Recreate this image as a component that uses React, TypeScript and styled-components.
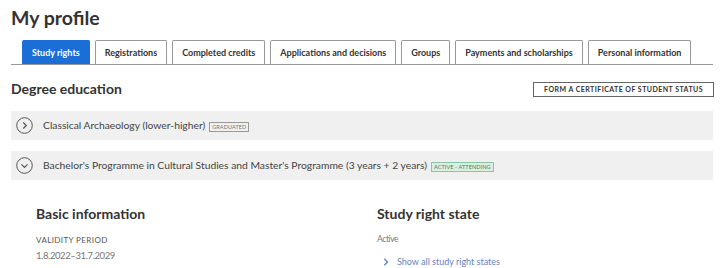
import React from "react";
import styled, { createGlobalStyle } from "styled-components";

const Global = createGlobalStyle`
  html, body { margin: 0; padding: 0; background: #fff; }
  body { font-family: Lato, "Open Sans", sans-serif; color: #333; }
`;

const Page = styled.div`
  padding: 3px 7px 0 11px;
  width: 702px;
`;

const Title = styled.h1`
  margin: 0;
  font-size: 19.5px;
  font-weight: 700;
  line-height: 30px;
  color: #333;
`;

const TabBar = styled.div`
  display: flex;
  gap: 5px;
  margin-top: 7px;
  padding-left: 11px;
  border-bottom: 1px solid #999;
`;

const Tab = styled.div<{ $active?: boolean }>`
  flex-shrink: 0;
  white-space: nowrap;
  height: 24px;
  padding: 0 9px;
  display: flex;
  align-items: center;
  font-size: 9px;
  font-weight: 700;
  border: 1px solid ${(p) => (p.$active ? "#1b6ed6" : "#999")};
  border-bottom: none;
  border-radius: 2px 2px 0 0;
  background: ${(p) => (p.$active ? "#1b6ed6" : "#fff")};
  color: ${(p) => (p.$active ? "#fff" : "#333")};
  box-sizing: border-box;
`;

const SectionHeader = styled.div`
  display: flex;
  justify-content: space-between;
  align-items: center;
  margin-top: 13px;
`;

const SectionTitle = styled.h2`
  margin: 0;
  font-size: 14px;
  font-weight: 700;
  line-height: 22px;
  color: #333;
`;

const OutlineButton = styled.div`
  height: 15px;
  box-sizing: border-box;
  border: 1px solid #666;
  padding: 0 10px;
  display: flex;
  align-items: center;
  font-size: 7px;
  font-weight: 700;
  letter-spacing: 0.45px;
  color: #333;
  margin-right: -1px;
`;

const Row = styled.div<{ $gap: number }>`
  margin-top: ${(p) => p.$gap}px;
  height: 29px;
  background: #f0f0f0;
  display: flex;
  align-items: center;
  padding-left: 5px;
  gap: 10px;
  font-size: 10.3px;
  color: #444;
`;

const Tag = styled.span<{ $green?: boolean }>`
  display: inline-flex;
  align-items: center;
  height: 10px;
  box-sizing: border-box;
  padding: 0 2px;
  margin-left: 4px;
  font-size: 5.5px;
  letter-spacing: 0.1px;
  text-transform: uppercase;
  border: 1px solid ${(p) => (p.$green ? "#8cc4a2" : "#999")};
  background: ${(p) => (p.$green ? "#d9efe1" : "transparent")};
  color: ${(p) => (p.$green ? "#4c7c5f" : "#777")};
  vertical-align: middle;
`;

const Details = styled.div`
  display: grid;
  grid-template-columns: 341px 1fr;
  padding-left: 25px;
  margin-top: 24px;
`;

const Col = styled.div`
  display: flex;
  flex-direction: column;
`;

const SubTitle = styled.h3`
  margin: 0;
  font-size: 14px;
  font-weight: 700;
  line-height: 20px;
  color: #333;
`;

const Label = styled.div`
  margin-top: 11px;
  font-size: 8px;
  letter-spacing: 0.4px;
  color: #555;
  text-transform: uppercase;
`;

const Value = styled.div<{ $top: number; $size: number }>`
  margin-top: ${(p) => p.$top}px;
  font-size: ${(p) => p.$size}px;
  letter-spacing: -0.4px;
  color: #777;
`;

const LinkRow = styled.div`
  margin-top: 12px;
  display: flex;
  align-items: center;
  gap: 8px;
  padding-left: 6px;
  font-size: 9px;
  color: #5f87c0;
`;

const Circle = ({ down }: { down?: boolean }) => (
  <svg width="17" height="17" viewBox="0 0 17 17">
    <circle cx="8.5" cy="8.5" r="7.8" fill="none" stroke="#555" strokeWidth="1" />
    {down ? (
      <path d="M5.5 7.3 L8.5 10.3 L11.5 7.3" fill="none" stroke="#555" strokeWidth="1.2" />
    ) : (
      <path d="M7.3 5.5 L10.3 8.5 L7.3 11.5" fill="none" stroke="#555" strokeWidth="1.2" />
    )}
  </svg>
);

const Chevron = () => (
  <svg width="6" height="8" viewBox="0 0 6 8">
    <path d="M1.3 0.8 L4.5 4 L1.3 7.2" fill="none" stroke="#5f87c0" strokeWidth="1.4" />
  </svg>
);

const tabs = [
  "Study rights",
  "Registrations",
  "Completed credits",
  "Applications and decisions",
  "Groups",
  "Payments and scholarships",
  "Personal information",
];

export default function App() {
  return (
    <Page>
      <Global />
      <Title>My profile</Title>
      <TabBar>
        {tabs.map((t, i) => (
          <Tab key={t} $active={i === 0}>
            {t}
          </Tab>
        ))}
      </TabBar>
      <SectionHeader>
        <SectionTitle>Degree education</SectionTitle>
        <OutlineButton>FORM A CERTIFICATE OF STUDENT STATUS</OutlineButton>
      </SectionHeader>
      <Row $gap={11}>
        <Circle />
        <span>
          Classical Archaeology (lower-higher)
          <Tag>Graduated</Tag>
        </span>
      </Row>
      <Row $gap={11}>
        <Circle down />
        <span>
          Bachelor's Programme in Cultural Studies and Master's Programme (3 years + 2 years)
          <Tag $green>Active - attending</Tag>
        </span>
      </Row>
      <Details>
        <Col>
          <SubTitle>Basic information</SubTitle>
          <Label>Validity period</Label>
          <Value $top={5} $size={9.5}>1.8.2022–31.7.2029</Value>
        </Col>
        <Col>
          <SubTitle>Study right state</SubTitle>
          <Value $top={10} $size={8.5}>Active</Value>
          <LinkRow>
            <Chevron />
            Show all study right states
          </LinkRow>
        </Col>
      </Details>
    </Page>
  );
}
